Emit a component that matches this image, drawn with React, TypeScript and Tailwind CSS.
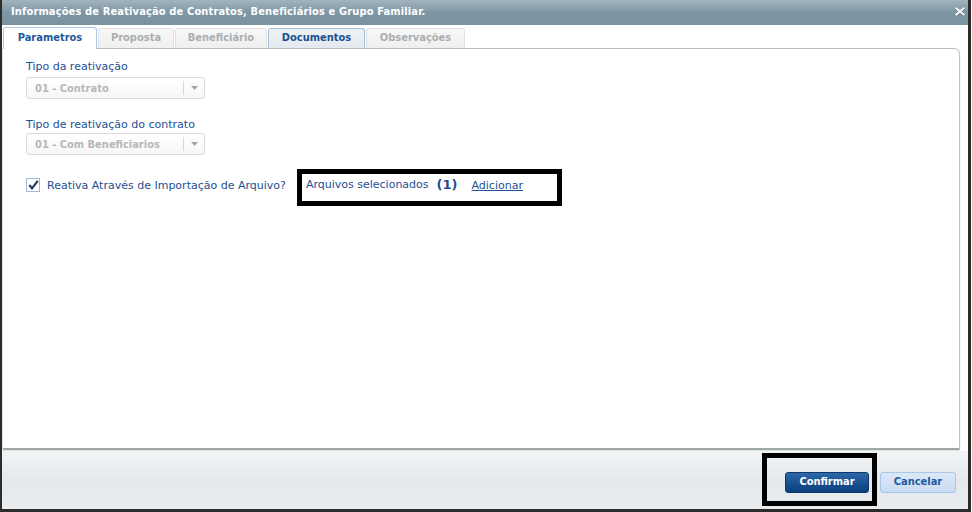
import React from "react";

const cond = { fontFamily: '"DejaVu Sans Condensed", "DejaVu Sans", Verdana, sans-serif' };

function SelectBox({ value }: { value: string }) {
  return (
    <div className="flex h-[22px] w-[179px] items-center rounded-[3px] border border-[#dadada] bg-gradient-to-b from-white to-[#f6f6f6]">
      <span className="flex-1 pl-[8px] text-[11px] font-bold leading-none text-[#b7b7b7]" style={cond}>
        {value}
      </span>
      <span className="h-[14px] w-px bg-[#d8d8d8]" />
      <span className="flex w-[20px] items-center justify-center">
        <svg width="7" height="4" viewBox="0 0 7 4">
          <path d="M0 0 L7 0 L3.5 4 Z" fill="#a4a4a4" />
        </svg>
      </span>
    </div>
  );
}

function Tab({
  label,
  width,
  variant,
}: {
  label: string;
  width: string;
  variant: "active" | "inactive" | "hover";
}) {
  if (variant === "active") {
    return (
      <div
        className={`${width} relative z-10 -mb-px flex h-[22px] items-center justify-center rounded-t-[3px] border border-b-0 border-[#a9c7e6] bg-white text-[11px] font-bold text-[#1f5a9e]`}
        style={cond}
      >
        {label}
      </div>
    );
  }
  if (variant === "hover") {
    return (
      <div
        className={`${width} flex h-[20px] items-center justify-center rounded-t-[3px] border border-b-0 border-[#a6bfd9] bg-gradient-to-b from-[#eef2f6] to-[#e3e9ef] text-[11px] font-bold text-[#1d4f8f]`}
        style={cond}
      >
        {label}
      </div>
    );
  }
  return (
    <div
      className={`${width} flex h-[20px] items-center justify-center rounded-t-[3px] border border-b-0 border-[#dfe2e4] bg-gradient-to-b from-[#f7f7f7] to-[#efefef] text-[11px] font-bold text-[#aaaeb1]`}
      style={cond}
    >
      {label}
    </div>
  );
}

export default function App() {
  return (
    <div
      className="relative h-[512px] w-[972px] overflow-hidden bg-white"
      style={{ fontFamily: '"DejaVu Sans", Verdana, sans-serif' }}
    >
      <div className="flex h-[512px] w-[971px] flex-col border-b-[3px] border-l-2 border-r-[3px] border-[#2c2c2c]">
        {/* Title bar */}
        <div className="flex h-[25px] items-center justify-between bg-gradient-to-b from-[#a3b4be] via-[#7d96a4] to-[#7a93a1] pl-[9px] pr-[3px]">
          <span className="text-[11px] font-bold tracking-[0.14px] text-white" style={cond}>
            Informações de Reativação de Contratos, Beneficiários e Grupo Familiar.
          </span>
          <svg width="10" height="9" viewBox="0 0 10 9" className="mb-[2px]">
            <path d="M1.5 1.5 L8.5 7.5 M8.5 1.5 L1.5 7.5" stroke="#4f6370" strokeWidth="2.6" strokeLinecap="square" transform="translate(0 0.6)" />
            <path d="M1.5 1.5 L8.5 7.5 M8.5 1.5 L1.5 7.5" stroke="#f1f3f5" strokeWidth="2.2" strokeLinecap="square" />
          </svg>
        </div>

        {/* Tab strip */}
        <div className="flex h-[23px] items-end gap-px bg-white pl-px">
          <Tab label="Parametros" width="w-[94px]" variant="active" />
          <Tab label="Proposta" width="w-[76px]" variant="inactive" />
          <Tab label="Beneficiário" width="w-[92px]" variant="inactive" />
          <Tab label="Documentos" width="w-[97px]" variant="hover" />
          <Tab label="Observações" width="w-[99px]" variant="inactive" />
        </div>

        {/* Panel */}
        <div className="mr-[8px] flex h-[402px] flex-col rounded-bl-[3px] rounded-tr-[6px] border-b-2 border-l border-r border-t border-b-[#9ea8a6] border-l-[#e3e5e6] border-r-[#b8c1c4] border-t-[#b3bcc0] bg-white pl-[23px] pt-[11px] shadow-[0_2px_2px_rgba(0,0,0,0.12)]">
          <div className="text-[11px] leading-[13px] text-[#1d5094]">Tipo da reativação</div>
          <div className="mt-[4px]">
            <SelectBox value="01 - Contrato" />
          </div>

          <div className="mt-[19px] text-[11px] leading-[13px] text-[#1d5094]">Tipo de reativação do contrato</div>
          <div className="mt-[2px]">
            <SelectBox value="01 - Com Beneficiarios" />
          </div>

          <div className="mt-[23px] flex h-[14px] items-center">
            <span className="flex h-[14px] w-[14px] items-center justify-center border border-[#a5b9d1] bg-white">
              <svg width="11" height="10" viewBox="0 0 11 10">
                <path d="M1.3 5 L4 8.3 L9.8 0.8" fill="none" stroke="#1f3d63" strokeWidth="2.2" />
              </svg>
            </span>
            <span className="ml-[7px] text-[11px] leading-[13px] text-[#1d5094]">
              Reativa Através de Importação de Arquivo?
            </span>
            <span className="ml-[20px] -mt-[2px] text-[11px] leading-[13px] text-[#1d5094]">Arquivos selecionados</span>
            <span className="ml-[8px] -mt-[2px] text-[13px] font-bold leading-[15px] text-[#1d4d8c]">(1)</span>
            <span className="ml-[14px] text-[11px] leading-[13px] text-[#1d5094] underline">Adicionar</span>
          </div>
        </div>

        {/* Footer */}
        <div className="mt-[1px] flex flex-1 justify-end gap-[11px] bg-gradient-to-b from-[#f2f4f6] via-[#e5e9ec] to-[#e9ecee] pr-[12px] pt-[21px]">
          <button
            className="flex h-[21px] w-[84px] items-center justify-center rounded-[3px] border border-[#0c386b] bg-gradient-to-b from-[#2c68aa] to-[#0c3e7c] text-[11px] font-bold text-white"
            style={cond}
          >
            Confirmar
          </button>
          <button
            className="flex h-[21px] w-[76px] items-center justify-center rounded-[3px] border border-[#a9c6e8] bg-gradient-to-b from-[#dbe8f7] to-[#cadcf2] text-[11px] font-bold text-[#1f5aa0]"
            style={cond}
          >
            Cancelar
          </button>
        </div>
      </div>

      {/* Annotation boxes */}
      <div className="absolute left-[297px] top-[169px] h-[37px] w-[265px] border-[5px] border-black" />
      <div className="absolute left-[762px] top-[453px] h-[53px] w-[115px] border-[5px] border-black" />
    </div>
  );
}
